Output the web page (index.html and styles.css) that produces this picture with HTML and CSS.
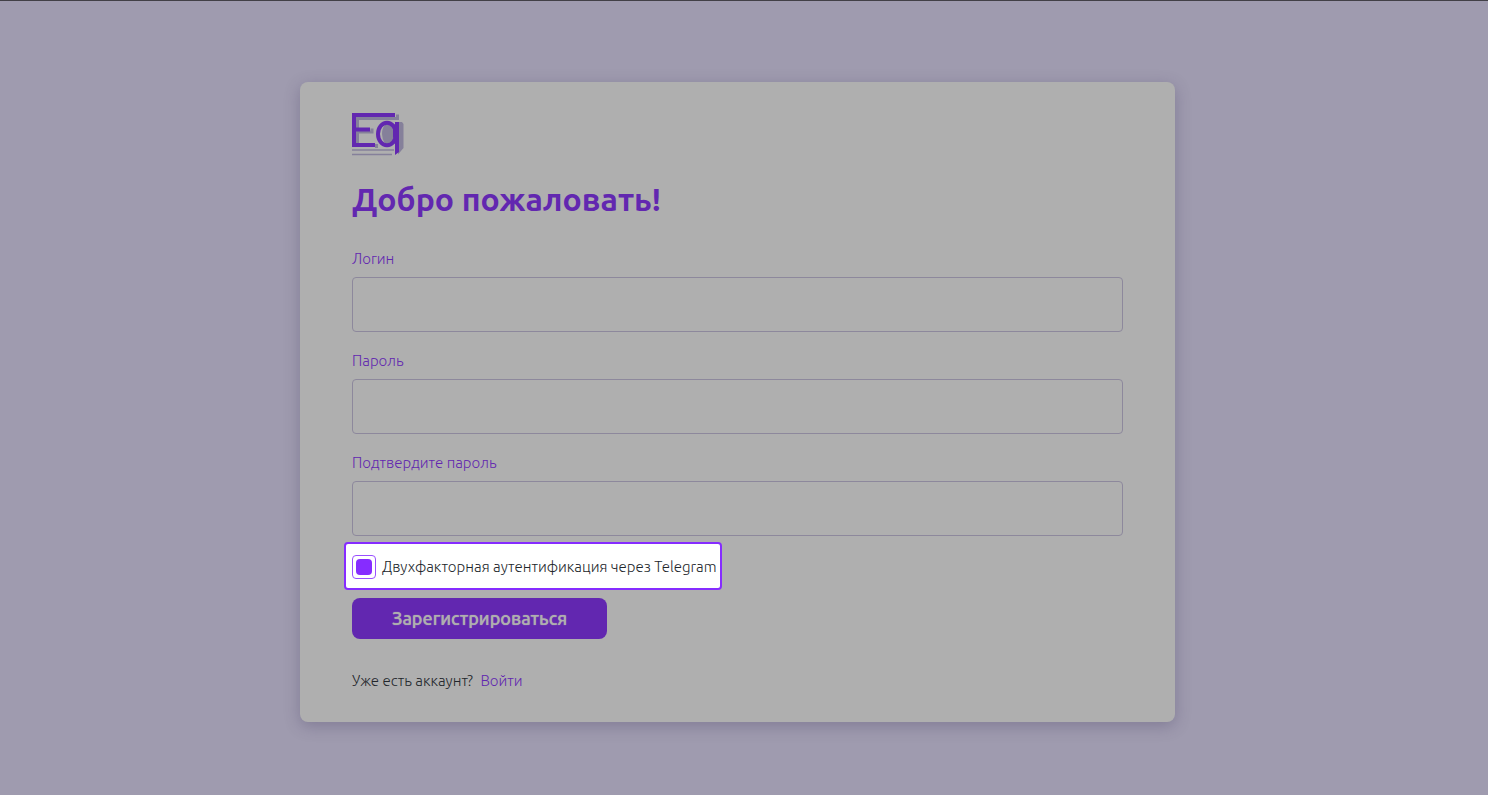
FILE: index.html
```html
<!DOCTYPE html>
<html lang="ru">
<head>
<meta charset="utf-8">
<meta name="viewport" content="width=device-width, initial-scale=1">
<title>Регистрация</title>
<link rel="stylesheet" href="styles.css">
</head>
<body>
<main class="page">
  <form class="card">
    <svg class="logo" viewBox="0 0 52 43" role="img" aria-label="Eq">
      <g fill="none" stroke="#85809a">
        <path d="M5.500 30V5.500H45.500V1.500M7 19H20V15.500M24.500 31V35" stroke-width="3"/>
        <path d="M0 37H42M0 41.500H40" stroke-width="1.500"/>
      </g>
      <path fill="#85809a" d="M46 9H50L51.500 11V35L46 41.500ZM34 11H43V31H33Q30 26 30 21Q30 14 34 11Z"/>
      <path fill="none" stroke="#6227b0" stroke-width="4" d="M43 2H2V32H23M2 16.500H18"/>
      <ellipse cx="35" cy="21" rx="9" ry="11.200" fill="none" stroke="#6227b0" stroke-width="4"/>
      <path fill="#6227b0" d="M43 9H47V39L43 42V28L41 24V17L43 13Z"/>
    </svg>
    <h1 class="title">Добро пожаловать!</h1>
    <div class="field">
      <label for="login">Логин</label>
      <input id="login" type="text" autocomplete="username">
    </div>
    <div class="field">
      <label for="password">Пароль</label>
      <input id="password" type="password" autocomplete="new-password">
    </div>
    <div class="field">
      <label for="confirm">Подтвердите пароль</label>
      <input id="confirm" type="password" autocomplete="new-password">
    </div>
    <label class="option">
      <input class="check" type="checkbox" checked>
      <span>Двухфакторная аутентификация через Telegram</span>
    </label>
    <button class="submit" type="submit">Зарегистрироваться</button>
    <p class="signin">Уже есть аккаунт? <a href="#">Войти</a></p>
  </form>
</main>
</body>
</html>
```
FILE: styles.css
```css
* {
  box-sizing: border-box;
}

body {
  margin: 0;
  background: #9f9baf;
  color: #22262b;
  font: 300 15px/20px Ubuntu, "Open Sans", "Noto Sans", sans-serif;
}

.page {
  display: flex;
  justify-content: center;
  min-height: 100vh;
  padding: 81px 29px 73px 16px;
  border-top: 1px solid #424047;
}

.card {
  display: flex;
  flex-direction: column;
  align-items: flex-start;
  width: 100%;
  max-width: 875px;
  padding: 31px 52px;
  border-radius: 8px;
  background: #afafaf;
  box-shadow: 0 4px 16px rgb(60 50 90 / 30%);
}

.logo {
  width: 52px;
  height: 43px;
}

.title {
  margin: 23px 0 30px;
  color: #6227b0;
  font-size: 32px;
  font-weight: 700;
  line-height: 40px;
}

.field {
  display: flex;
  flex-direction: column;
  gap: 8px;
  width: 100%;
  margin-bottom: 19px;
  color: #6227b0;
}

.field input {
  width: 100%;
  height: 55px;
  padding: 0 16px;
  border: 1px solid #8d889c;
  border-radius: 4px;
  background: transparent;
  color: inherit;
  font: inherit;
}

.option {
  display: flex;
  align-items: center;
  gap: 6px;
  min-height: 48px;
  margin: -13px 0 8px -8px;
  padding: 2px 4px 0 6px;
  border: 2px solid #862cff;
  border-radius: 4px;
  background: #fff;
}

.check {
  appearance: none;
  flex: none;
  width: 24px;
  height: 24px;
  margin: 0;
  padding: 3px;
  border: 1px solid #9a50ff;
  border-radius: 4px;
}

.check:checked::before {
  content: "";
  display: block;
  height: 100%;
  border-radius: 4px;
  background: #862cff;
}

.submit {
  height: 41px;
  padding: 0 40px 2px;
  border: 0;
  border-radius: 8px;
  background: #6227b0;
  color: #afafaf;
  font: inherit;
  font-size: 18px;
  font-weight: 500;
  text-shadow: 0 0 1px currentColor;
}

.signin {
  margin: 32px 0 0;
}

.signin a {
  margin-left: 4px;
  color: #6227b0;
  text-decoration: none;
}
```
